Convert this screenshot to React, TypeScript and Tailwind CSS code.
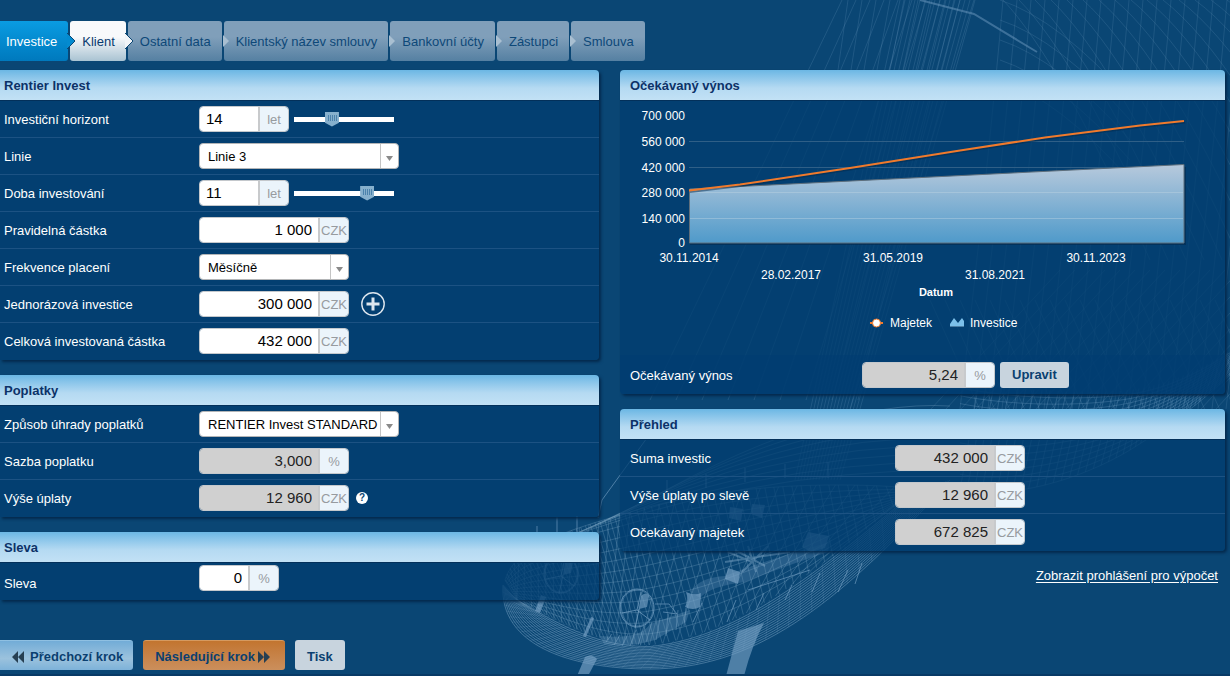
import { useId, useState } from "react";
import type { ReactNode } from "react";
import clsx from "clsx";

type Point = [number, number];

// Point on a curve made of two cubic segments (7 control points)
function curvePoint(c: Point[], t: number): Point {
  const second = t > 0.5;
  const o = second ? 3 : 0;
  const u = second ? (t - 0.5) * 2 : t * 2;
  const v = 1 - u;
  const at = (k: 0 | 1) =>
    v * v * v * c[o][k] +
    3 * v * v * u * c[o + 1][k] +
    3 * v * u * u * c[o + 2][k] +
    u * u * u * c[o + 3][k];
  return [at(0), at(1)];
}

function mix(a: Point[], b: Point[], t: number): Point[] {
  return a.map((p, i) => [p[0] + (b[i][0] - p[0]) * t, p[1] + (b[i][1] - p[1]) * t]);
}

function toPath(c: Point[]) {
  const s = c.map((p) => `${p[0].toFixed(1)},${p[1].toFixed(1)}`);
  return `M${s[0]} C${s.slice(1).join(" ")}`;
}

const range = (n: number) => Array.from({ length: n }, (_, i) => i);

const keel: Point[] = [[503, 585], [499, 645], [570, 669], [650, 669], [750, 669], [835, 610], [950, 480]];
const rail: Point[] = [[517, 600], [560, 622], [600, 646], [650, 645], [730, 636], [800, 585], [915, 490]];
const deck: Point[] = [[505, 580], [515, 545], [570, 530], [630, 512], [710, 488], [820, 478], [935, 490]];
const farKeel: Point[] = [[960, 490], [1010, 500], [1080, 480], [1130, 450], [1170, 425], [1200, 405], [1240, 365]];
const farRail: Point[] = [[960, 380], [1010, 390], [1080, 395], [1130, 390], [1170, 385], [1200, 370], [1240, 345]];

function ribs(a: Point[], b: Point[], count: number, skew: number) {
  return range(count)
    .map((i) => {
      const t = i / count;
      const p = curvePoint(a, t);
      const q = curvePoint(b, Math.min(1, Math.max(0, t + skew)));
      return `M${p[0].toFixed(1)},${p[1].toFixed(1)}L${q[0].toFixed(1)},${q[1].toFixed(1)}`;
    })
    .join("");
}

function Wheel({ x, y }: { x: number; y: number }) {
  return (
    <g transform={`translate(${x} ${y})`} stroke="#7ba5c8">
      <ellipse rx="17" ry="19" strokeOpacity="0.7" />
      <ellipse rx="16" ry="18" strokeOpacity="0.4" />
      <path d="M0,2L-15,5M0,2L13,12M0,2L4,-16M2,1L-2,20" strokeOpacity="0.7" />
      <path d="M4,-12q5,-5 8,0l-2,11l-8,2z" fill="#7ba5c8" fillOpacity="0.6" stroke="none" />
    </g>
  );
}

function Wireframe() {
  return (
    <svg
      className="pointer-events-none absolute top-0 left-0"
      width="1230"
      height="676"
      viewBox="0 0 1230 676"
      fill="none"
      aria-hidden="true"
    >
      {/* rigging */}
      <g stroke="#6d9abf" strokeOpacity="0.22">
        {range(9).map((i) => (
          <path key={i} d={`M${842 + i * 14},0L${650 + i * 26},400M${848 + i * 14},0L${838 + i * 13},70`} />
        ))}
        {range(16).map((i) => (
          <path key={i} d={`M${900 + i * 5},0L${795 + i * 3},480`} />
        ))}
        <path d="M974,0L850,410" />
      </g>
      {/* sail mesh */}
      <g stroke="#6d9abf" strokeOpacity="0.2">
        {range(24).map((i) => (
          <path
            key={i}
            d={`M${1003 + i * 14},0Q${990 + i * 14},150 ${960 + i * 14},409M${1003 + i * 16},0Q${1060 + i * 18},60 ${1150 + i * 18},260`}
          />
        ))}
        {range(5).map((i) => (
          <path key={i} d={`M1000,${i * 20}Q1060,${20 + i * 20} 1130,${100 + i * 20}`} />
        ))}
        {range(20).map((i) => (
          <path key={i} d={`M${930 + i * 15},410L${1060 + i * 15},270M${930 + i * 15},300L${980 + i * 15},410`} />
        ))}
      </g>
      <path d="M920,0L974,14L1037,52" stroke="#6d9abf" strokeOpacity="0.5" strokeWidth="2" />
      {/* far hull */}
      <g stroke="#6d9abf" strokeOpacity="0.3">
        {range(14).map((i) => (
          <path key={i} d={toPath(mix(farKeel, farRail, i / 14))} />
        ))}
        <path d={ribs(farKeel, farRail, 44, 0.06)} />
      </g>
      {/* hull sides */}
      <g stroke="#8fb4d2" strokeOpacity="0.42">
        {range(16).map((i) => (
          <path key={i} d={toPath(mix(keel, rail, i / 16))} />
        ))}
        <path d={ribs(keel, rail, 50, 0.05)} strokeOpacity="0.14" />
      </g>
      {/* deck */}
      <g stroke="#8fb4d2" strokeOpacity="0.26">
        {range(12).map((i) => (
          <path key={i} d={toPath(mix(deck, rail, i / 12))} />
        ))}
        <path d={ribs(deck, rail, 70, 0.04)} />
        <path d={ribs(deck, rail, 34, -0.12)} />
        {range(9).map((i) => (
          <path key={i} d={`M${540 + i * 10},${548 - i * 4}Q${740 + i * 10},${470 - i * 9} 950,${470 - i * 8}`} />
        ))}
      </g>
      {/* railing posts */}
      <g stroke="#7ba5c8" strokeOpacity="0.6">
        <path d="M557,517v20M577,516v18M537,526v8M602,500l-4,18M602,500L660,420M667,480v14M706,474v14M745,468v14M785,464v14M828,462v16" />
        <path d="M702,603L693,622M736,600L727,622M764,593L756,610M792,585L785,600M820,573L812,592M848,570L838,592M862,563L855,584" />
        <path d="M748,590L810,570M655,604l14,0l8,10l-14,-2" />
      </g>
      <g fill="#7ba5c8">
        <g fillOpacity="0.65">
          <path d="M686,592q9,4 15,1l-1,14q-7,4 -15,0q4,-7 1,-15z" />
          <path d="M728,568l12,4l-2,12l-13,-5z" />
          <path d="M541,595l5,2l-6,16l-5,-2zM591,617l3,1l-8,19l-3,-1z" />
        </g>
        <g fillOpacity="0.5">
          <path d="M730,507l13,2l-2,12l-12,-3zM752,504l13,1l-3,13l-11,-4z" />
          <path d="M808,532l21,4l-4,12l-14,4l-9,-5z" />
        </g>
        <path
          d="M690,592Q700,577 725,576Q760,562 830,542L828,552Q780,568 745,582Q710,586 700,598z"
          fillOpacity="0.25"
        />
        <path d="M600,636Q640,640 650,624L690,610L686,622L655,640Q630,648 604,644Z" fillOpacity="0.3" />
        <path d="M738,631L764,623Q752,645 744,676L726,676Z" fillOpacity="0.6" />
        <path d="M585,657Q592,653 597,659L588,676H577Z" fillOpacity="0.65" />
      </g>
      <path
        d="M725,562L790,552M735,550L765,566M742,572L768,546M748,546L756,572M728,552L752,562"
        stroke="#8fb4d2"
        strokeOpacity="0.4"
        strokeWidth="2"
      />
      <path
        d="M606,642L612,634M614,645L620,635M622,646L628,634M630,646L636,630M638,645L644,626M646,642L652,622M656,640L660,618M666,636L668,614M676,630L678,610M684,626L686,608"
        stroke="#8fb4d2"
        strokeOpacity="0.4"
      />
      <Wheel x={561} y={574} />
      <Wheel x={637} y={608} />
    </svg>
  );
}

const steps = [
  "Investice",
  "Klient",
  "Ostatní data",
  "Klientský název smlouvy",
  "Bankovní účty",
  "Zástupci",
  "Smlouva",
];

function Steps() {
  return (
    <nav className="flex h-10 gap-0.5" aria-label="Kroky">
      {steps.map((step, i) => (
        <button
          key={step}
          type="button"
          className={clsx(
            "relative whitespace-nowrap rounded-[3px] pt-0.5 pr-[11px]",
            i === 0 && "rounded-l-none bg-linear-to-b from-[#0a9ce2] to-[#0079bd] pl-[6px] text-white",
            i === 1 && "bg-linear-to-b from-[#f8f9fb] from-40% to-[#a9c3d2] pl-3 text-[#083b6e]",
            i > 1 && "bg-linear-to-b from-[#809fba] from-40% to-[#5580a2] pl-3 text-[#0d4878]"
          )}
        >
          {step}
          {i < steps.length - 1 && (
            <svg
              className="absolute top-[11px] -right-2 z-10"
              width="9"
              height="18"
              viewBox="0 0 9 18"
              aria-hidden="true"
            >
              {i < 2 ? (
                <path d="M0,1L8,9L0,17" fill={i === 0 ? "#048bd0" : "#f1f4f7"} stroke="#0a4674" />
              ) : (
                <path d="M2,3L8,9L2,15Z" fill="#a9bfd1" />
              )}
            </svg>
          )}
        </button>
      ))}
    </nav>
  );
}

function Panel({ title, wide, children }: { title: string; wide?: boolean; children: ReactNode }) {
  return (
    <section
      className={clsx(
        "rounded-[4px] bg-[#023d70]/75 shadow-[2px_2px_3px_#04294c]",
        !wide && "rounded-l-none"
      )}
    >
      <h2
        className={clsx(
          "h-[30px] rounded-tr-[4px] bg-linear-to-b from-[#6bb7e4] via-[#b5daf2] via-60% to-[#c2e1f5] leading-8 font-bold text-[#0c3268]",
          wide ? "rounded-tl-[4px] pl-[10px]" : "pl-1"
        )}
      >
        {title}
      </h2>
      <div className="border-t border-[#03305a]">{children}</div>
    </section>
  );
}

interface RowProps {
  label: string;
  htmlFor: string;
  wide?: boolean;
  children: ReactNode;
}

function Row({ label, htmlFor, wide, children }: RowProps) {
  return (
    <div className="flex h-[37px] items-center border-b border-[#1c5283] last:border-transparent">
      <label htmlFor={htmlFor} className={clsx("pt-0.5", wide ? "w-[275px] pl-[10px]" : "w-[199px] pl-1")}>
        {label}
      </label>
      {children}
    </div>
  );
}

interface FieldProps {
  id: string;
  value: string;
  unit: string;
  width: string;
  align?: "left" | "right";
  readOnly?: boolean;
}

function Field({ id, value, unit, width, align = "right", readOnly }: FieldProps) {
  return (
    <span className={clsx("flex h-[26px] overflow-hidden rounded-[4px] border border-[#c4c8cc]", width)}>
      <input
        id={id}
        defaultValue={value}
        readOnly={readOnly}
        className={clsx(
          "min-w-0 flex-1 border-r-2 border-[#c8cacc] px-[6px] text-[15px] outline-none",
          align === "right" ? "text-right" : "text-left",
          readOnly ? "bg-[#d0d0d0] text-[#222]" : "bg-white text-black"
        )}
      />
      <span className="w-7 bg-[#ebf4fb] pt-px text-center leading-6 text-[#979b9f]">{unit}</span>
    </span>
  );
}

function Select({ id, options, width }: { id: string; options: string[]; width: string }) {
  return (
    <span className={clsx("relative", width)}>
      <select
        id={id}
        className="block h-[26px] w-full appearance-none rounded-[4px] border border-[#b3b5b7] bg-white pt-px pl-2 text-black outline-none"
      >
        {options.map((o) => (
          <option key={o}>{o}</option>
        ))}
      </select>
      <span className="pointer-events-none absolute inset-y-px right-px flex w-[18px] items-center justify-center border-l border-[#c4c4c4] pt-1">
        <svg width="7" height="5" viewBox="0 0 7 5" aria-hidden="true">
          <path d="M0,0H7L3.5,5Z" fill="#8a8a8a" />
        </svg>
      </span>
    </span>
  );
}

interface YearsProps {
  id: string;
  label: string;
  initial: number;
  min: number;
  max: number;
}

function YearsRow({ id, label, initial, min, max }: YearsProps) {
  const [years, setYears] = useState(initial);

  return (
    <Row label={label} htmlFor={id}>
      <Field key={years} id={id} value={String(years)} unit="let" width="w-[90px]" align="left" />
      <input
        type="range"
        aria-label={label}
        min={min}
        max={max}
        value={years}
        onChange={(e) => setYears(Number(e.target.value))}
        className="ml-[5px] h-[15px] w-[100px] appearance-none bg-[linear-gradient(#fff,#fff)] bg-[length:100%_5px] bg-center bg-no-repeat [&::-webkit-slider-thumb]:h-[15px] [&::-webkit-slider-thumb]:w-[14px] [&::-webkit-slider-thumb]:appearance-none [&::-webkit-slider-thumb]:bg-[#86b0cd] [&::-webkit-slider-thumb]:bg-[repeating-linear-gradient(90deg,#4b82ac_0_1px,#86b0cd_1px_2px)] [&::-webkit-slider-thumb]:bg-[length:9px_6px] [&::-webkit-slider-thumb]:bg-[position:3px_3px] [&::-webkit-slider-thumb]:bg-no-repeat [&::-webkit-slider-thumb]:[clip-path:polygon(0_0,100%_0,100%_75%,50%_100%,0_75%)]"
      />
    </Row>
  );
}

const yLabels = [
  { text: "700 000", y: 15 },
  { text: "560 000", y: 41 },
  { text: "420 000", y: 67 },
  { text: "280 000", y: 92 },
  { text: "140 000", y: 118 },
  { text: "0", y: 142 },
];

const xLabels = [
  { text: "30.11.2014", x: 69, y: 161 },
  { text: "28.02.2017", x: 171, y: 178 },
  { text: "31.05.2019", x: 273, y: 161 },
  { text: "31.08.2021", x: 375, y: 178 },
  { text: "30.11.2023", x: 476, y: 161 },
];

function Chart() {
  const fill = useId();

  return (
    <svg className="block w-full" viewBox="0 0 605 254" role="img" aria-label="Očekávaný výnos">
      <defs>
        <linearGradient id={fill} x1="0" y1="0" x2="0" y2="1">
          <stop offset="0" stopColor="#b7c9dc" />
          <stop offset="1" stopColor="#4f9aca" />
        </linearGradient>
      </defs>
      <path d="M69,40.5H564M69,66.5H564" stroke="#2f5f87" />
      <path d="M70,144L70,90L566,66V144H70Z" fill="#04294c" fillOpacity="0.6" />
      <path d="M69.5,88L564,63.5V142H69.5Z" fill={`url(#${fill})`} stroke="#5f6f7c" />
      <path d="M70,91.5H563M70,117.5H563" stroke="#c3d6e4" strokeOpacity="0.4" />
      <path
        d="M70,91L120,85L230,68.5L340,51L425,38L520,26L565,21.5"
        fill="none"
        stroke="#04294c"
        strokeOpacity="0.5"
        strokeWidth="2"
      />
      <path
        d="M69,89.5L120,83.5L230,67L340,49.5L425,36.5L520,24.5L564,20"
        fill="none"
        stroke="#f07a2c"
        strokeWidth="2"
      />
      <g fill="#fff" fontSize="12">
        {yLabels.map((l) => (
          <text key={l.text} x="65" y={l.y + 4} textAnchor="end">
            {l.text}
          </text>
        ))}
        {xLabels.map((l) => (
          <text key={l.text} x={l.x} y={l.y} textAnchor="middle">
            {l.text}
          </text>
        ))}
        <text x="316" y="195" textAnchor="middle" fontSize="11" fontWeight="bold">
          Datum
        </text>
        <text x="270" y="226">
          Majetek
        </text>
        <text x="350" y="226">
          Investice
        </text>
      </g>
      {/* legend symbols */}
      <path d="M250,222H263" stroke="#f07a2c" strokeWidth="2" />
      <circle cx="256.5" cy="222" r="4" fill="#fff" stroke="#f07a2c" />
      <path d="M330,226V223L334,217L338,222L342,217L344,220V226Z" fill="#7cc0ea" />
      <path d="M330,225.5H344" stroke="#4b7fa6" />
    </svg>
  );
}

export default function App() {
  return (
    <div className="relative min-h-screen overflow-hidden border-b-2 border-[#083a66] bg-[#0a4674] pt-[21px] font-['Liberation_Sans',Arial,sans-serif] text-[13px] leading-4 text-white">
      <Wireframe />
      <div className="relative">
        <Steps />

        <main className="mt-[9px] grid grid-cols-[599fr_605fr] items-start gap-[21px] pr-[5px]">
          <div className="flex flex-col gap-[15px]">
            <Panel title="Rentier Invest">
              <YearsRow id="horizon" label="Investiční horizont" initial={14} min={5} max={30} />
              <Row label="Linie" htmlFor="line">
                <Select id="line" options={["Linie 3"]} width="w-[200px]" />
              </Row>
              <YearsRow id="duration" label="Doba investování" initial={11} min={1} max={14} />
              <Row label="Pravidelná částka" htmlFor="regular">
                <Field id="regular" value="1 000" unit="CZK" width="w-[150px]" />
              </Row>
              <Row label="Frekvence placení" htmlFor="frequency">
                <Select id="frequency" options={["Měsíčně"]} width="w-[150px]" />
              </Row>
              <Row label="Jednorázová investice" htmlFor="single">
                <Field id="single" value="300 000" unit="CZK" width="w-[150px]" />
                <button type="button" aria-label="Přidat investici" className="ml-3">
                  <svg width="24" height="24" viewBox="0 0 24 24" fill="none" aria-hidden="true">
                    <circle cx="12" cy="12" r="11.2" stroke="#dde6ee" strokeWidth="1.4" />
                    <path d="M12,5.5V18.5M5.5,12H18.5" stroke="#dde6ee" strokeWidth="3" />
                  </svg>
                </button>
              </Row>
              <Row label="Celková investovaná částka" htmlFor="total">
                <Field id="total" value="432 000" unit="CZK" width="w-[150px]" />
              </Row>
            </Panel>

            <Panel title="Poplatky">
              <Row label="Způsob úhrady poplatků" htmlFor="feeType">
                <Select id="feeType" options={["RENTIER Invest STANDARD"]} width="w-[200px]" />
              </Row>
              <Row label="Sazba poplatku" htmlFor="feeRate">
                <Field id="feeRate" value="3,000" unit="%" width="w-[150px]" readOnly />
              </Row>
              <Row label="Výše úplaty" htmlFor="fee">
                <Field id="fee" value="12 960" unit="CZK" width="w-[150px]" readOnly />
                <button
                  type="button"
                  aria-label="Nápověda"
                  className="ml-[7px] h-3 w-3 rounded-full bg-white text-center text-[10px] leading-3 font-bold text-[#0a4674]"
                >
                  ?
                </button>
              </Row>
            </Panel>

            <Panel title="Sleva">
              <div className="flex h-[37px] items-start pt-0.5">
                <label htmlFor="discount" className="w-[199px] pt-[11px] pl-1">
                  Sleva
                </label>
                <Field id="discount" value="0" unit="%" width="w-[80px]" />
              </div>
            </Panel>

            <div className="mt-[25px] flex gap-[10px] font-bold text-[#0b3f70]">
              <button
                type="button"
                className="flex h-[30px] items-center gap-[6px] rounded-[3px] rounded-l-none border-t border-[#8fc0e2] bg-linear-to-b from-[#72acd7] via-[#9bc2dd] via-60% to-[#7db2d9] pt-0.5 pr-[10px] pl-3"
              >
                <svg width="12" height="12" viewBox="0 0 12 12" fill="#263f52" aria-hidden="true">
                  <path d="M6,0V12L0,6ZM12,0V12L6,6Z" />
                </svg>
                Předchozí krok
              </button>
              <button
                type="button"
                className="flex h-[30px] items-center gap-[3px] rounded-[3px] border-t border-[#d59a60] bg-linear-to-b from-[#c2752f] to-[#cb8f5c] pt-0.5 pr-[15px] pl-3"
              >
                Následující krok
                <svg width="12" height="12" viewBox="0 0 12 12" fill="#263f52" aria-hidden="true">
                  <path d="M0,0V12L6,6ZM6,0V12L12,6Z" />
                </svg>
              </button>
              <button type="button" className="h-[30px] rounded-[3px] bg-[#c8d4de] px-3 pt-[3px]">
                Tisk
              </button>
            </div>
          </div>

          <div className="flex flex-col gap-[15px]">
            <Panel title="Očekávaný výnos" wide>
              <Chart />
              <div className="flex h-[39px] items-center rounded-b-[4px] bg-[#003c72]/60">
                <label htmlFor="yield" className="w-[242px] pt-0.5 pl-[10px]">
                  Očekávaný výnos
                </label>
                <Field id="yield" value="5,24" unit="%" width="w-[133px]" readOnly />
                <button
                  type="button"
                  className="ml-[5px] h-[26px] rounded-[3px] bg-[#c8d4de] px-3 font-bold text-[#0b3f70]"
                >
                  Upravit
                </button>
              </div>
            </Panel>

            <Panel title="Přehled" wide>
              <Row label="Suma investic" htmlFor="sum" wide>
                <Field id="sum" value="432 000" unit="CZK" width="w-[130px]" readOnly />
              </Row>
              <Row label="Výše úplaty po slevě" htmlFor="feeAfter" wide>
                <Field id="feeAfter" value="12 960" unit="CZK" width="w-[130px]" readOnly />
              </Row>
              <Row label="Očekávaný majetek" htmlFor="assets" wide>
                <Field id="assets" value="672 825" unit="CZK" width="w-[130px]" readOnly />
              </Row>
            </Panel>

            <a href="#prohlaseni" className="mt-[2px] mr-[7px] self-end underline underline-offset-2">
              Zobrazit prohlášení pro výpočet
            </a>
          </div>
        </main>
      </div>
    </div>
  );
}
